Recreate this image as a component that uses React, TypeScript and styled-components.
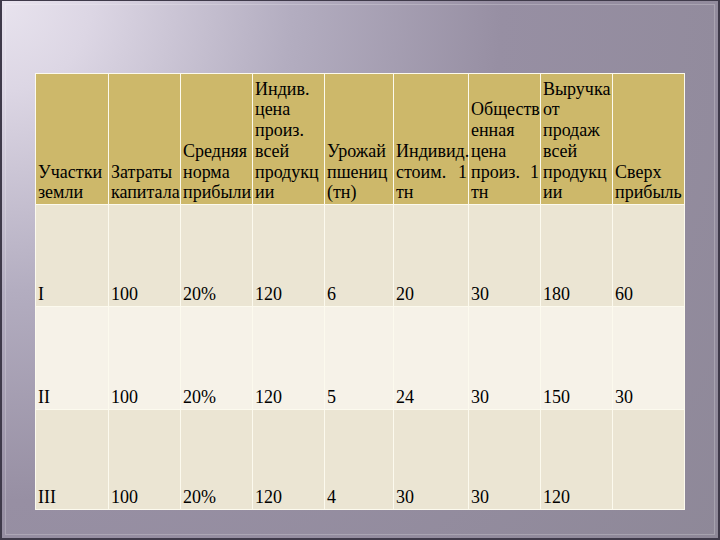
import React from 'react'
import styled, { createGlobalStyle } from 'styled-components'

const GlobalStyle = createGlobalStyle`
  html, body {
    margin: 0;
    padding: 0;
  }
  body {
    font-family: "Liberation Serif", serif;
  }
`

type HeadLine = string | [string, string]

const headers: HeadLine[][] = [
  ['Участки', 'земли'],
  ['Затраты', 'капитала'],
  ['Средняя', 'норма', 'прибыли'],
  ['Индив.', 'цена', 'произ.', 'всей', 'продукц', 'ии'],
  ['Урожай', 'пшениц', '(тн)'],
  ['Индивид.', ['стоим.', '1'], 'тн'],
  ['Обществ', 'енная', 'цена', ['произ.', '1'], 'тн'],
  ['Выручка', 'от', 'продаж', 'всей', 'продукц', 'ии'],
  ['Сверх', 'прибыль'],
]

const rows: string[][] = [
  ['I', '100', '20%', '120', '6', '20', '30', '180', '60'],
  ['II', '100', '20%', '120', '5', '24', '30', '150', '30'],
  ['III', '100', '20%', '120', '4', '30', '30', '120', ''],
]

export default function App() {
  return (
    <>
      <GlobalStyle />
      <Slide>
        <Grid>
          {headers.map((lines, idx) => (
            <HeadCell key={`h${idx}`}>
              {lines.map((line, i) =>
                Array.isArray(line) ? (
                  <Line key={i} $justify>
                    <span>{line[0]}</span>
                    <span>{line[1]}</span>
                  </Line>
                ) : (
                  <Line key={i}>{line}</Line>
                ),
              )}
            </HeadCell>
          ))}
          {rows.map((row, idx) =>
            row.map((value, i) => (
              <Cell key={`${idx}-${i}`} $light={idx % 2 === 1}>
                {value}
              </Cell>
            )),
          )}
        </Grid>
      </Slide>
    </>
  )
}

const Slide = styled.div`
  position: relative;
  box-sizing: border-box;
  width: 720px;
  height: 540px;
  padding: 72px 0 0 33px;
  border: 2px solid #3f3a4a;
  border-top-width: 1px;
  background: radial-gradient(
    circle at 0 0,
    #e8e3ee 0,
    #dcd6e4 90px,
    #b3adc0 290px,
    #978fa3 500px,
    #8e8898 900px
  );
  overflow: hidden;

  &:after {
    content: '';
    position: absolute;
    inset: 3px;
    border: 1px solid rgba(255, 255, 255, 0.22);
    pointer-events: none;
  }
`

const Grid = styled.div`
  display: grid;
  grid-template-columns: 72px 71px 71px 71px 68px 74px 71px 71px 71px;
  grid-template-rows: 130px 101px 102px 99px;
  gap: 1px;
  padding: 1px;
  width: max-content;
  background: #fcfaee;
  font-family: "Liberation Serif", serif;
  font-size: 18px;
  line-height: 20.7px;
  color: #000;
`

const Cell = styled.div<{ $light?: boolean }>`
  display: flex;
  flex-direction: column;
  justify-content: flex-end;
  padding: 0 1px 1px 2px;
  background: ${(props) => (props.$light ? '#f6f2e8' : '#ebe5d3')};
  white-space: nowrap;
  min-width: 0;
`

const HeadCell = styled(Cell)`
  background: #cdb86a;
`

const Line = styled.div<{ $justify?: boolean }>`
  display: ${(props) => (props.$justify ? 'flex' : 'block')};
  justify-content: space-between;
  white-space: nowrap;
`
